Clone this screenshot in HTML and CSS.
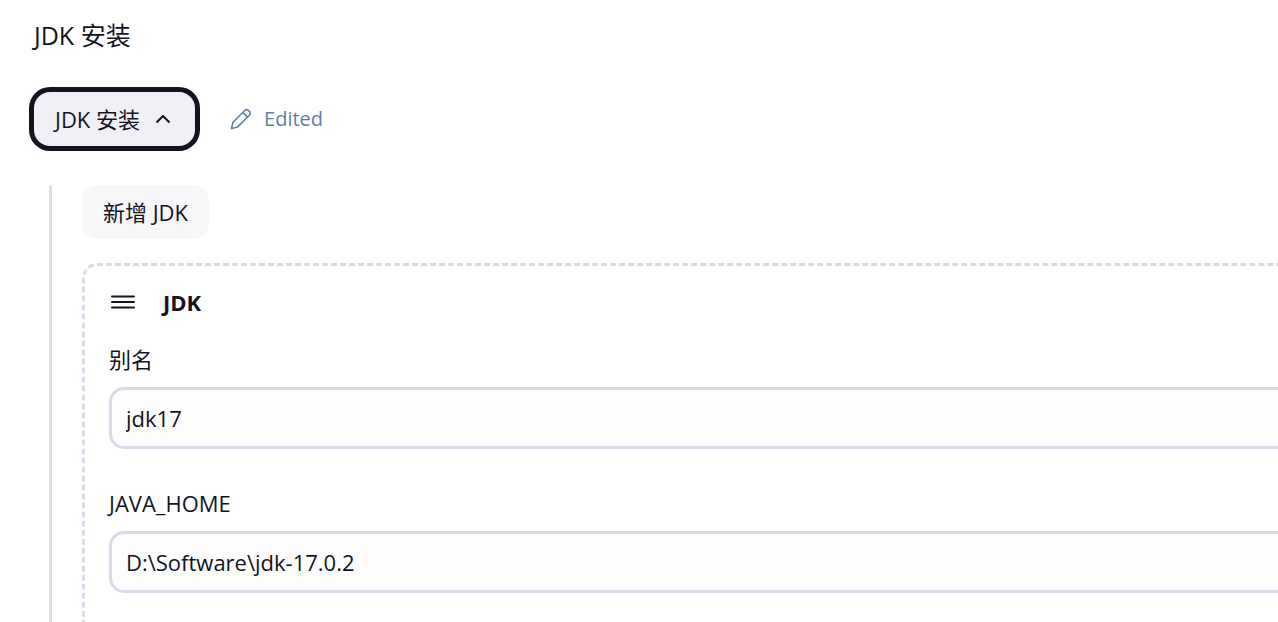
FILE: index.html
```
<!DOCTYPE html>
<html lang="zh-CN">
<head>
<meta charset="utf-8">
<meta name="viewport" content="width=device-width, initial-scale=1">
<title>JDK 安装</title>
<link rel="stylesheet" href="styles.css">
</head>
<body>
<main class="page">
  <h1 class="page-title">JDK 安装</h1>
  <div class="toolbar">
    <button class="toggle" type="button" aria-expanded="true">
      <span>JDK 安装</span>
      <svg class="chevron" viewBox="0 0 16 16" aria-hidden="true"><path d="M1.500 11.500 8 5 14.500 11.500"/></svg>
    </button>
    <div class="edited">
      <svg class="pencil" viewBox="0 0 22 22" aria-hidden="true"><path d="M1.500 20.500 3 14.200 14.700 2.500C17.300-.1 22 4.500 19.400 7.200L7.700 18.900ZM12.800 4.400 17.500 9.100"/></svg>
      <span>Edited</span>
    </div>
  </div>
  <section class="installations">
    <button class="add" type="button">新增 JDK</button>
    <form class="card">
      <div class="card-header">
        <svg class="handle" viewBox="0 0 24 14" aria-hidden="true"><path d="M1 1.500H23M1 7H23M1 12.500H23"/></svg>
        <strong>JDK</strong>
      </div>
      <div class="field">
        <label class="label" for="name">别名</label>
        <input class="input" id="name" type="text" value="jdk17">
      </div>
      <div class="field">
        <label class="label" for="home">JAVA_HOME</label>
        <input class="input" id="home" type="text" value="D:\Software\jdk-17.0.2">
      </div>
    </form>
  </section>
</main>
</body>
</html>
```
FILE: styles.css
```
* { box-sizing: border-box; }

body {
  margin: 0;
  background: #fff;
  color: #14141f;
  font: 22px/30px "Open Sans", "Noto Sans CJK SC", sans-serif;
}

button, input { font: inherit; color: inherit; }

.page {
  display: flex;
  flex-direction: column;
  height: 100vh;
  padding: 18px 0 0 34px;
  overflow: hidden;
}

.page-title {
  margin: 0;
  font-size: 25px;
  font-weight: 400;
  line-height: 34px;
}

.toolbar {
  display: flex;
  align-items: center;
  gap: 35px;
  margin-top: 40px;
}

.toggle {
  display: flex;
  align-items: center;
  gap: 15px;
  padding: 12px 24px 12px 21px;
  border: 0;
  border-radius: 16px;
  background: #f1f0f7;
  box-shadow: 0 0 0 5px #14141f;
}

.chevron, .pencil, .handle {
  fill: none;
  stroke: currentColor;
  stroke-width: 2;
  stroke-linejoin: round;
}

.chevron { width: 16px; height: 16px; }

.edited {
  display: flex;
  align-items: center;
  gap: 12px;
  color: #5f7fa6;
  font-size: 20px;
}

.pencil { width: 22px; height: 22px; stroke-width: 1.5; }

.installations {
  flex: 1 0 auto;
  display: flex;
  flex-direction: column;
  align-items: flex-start;
  gap: 24px;
  margin: 39px -48px 0 15px;
  padding-left: 30px;
  border-left: 3px solid #d7dde8;
  border-top-left-radius: 2px;
}

.add {
  padding: 12px 21px;
  border: 0;
  border-radius: 15px;
  background: #f7f7fa;
}

.card {
  flex: 1 0 auto;
  align-self: stretch;
  padding: 21px 24px 48px;
  border: 3px dashed #d7dde8;
  border-radius: 15px;
}

.card-header {
  display: flex;
  align-items: center;
  gap: 28px;
  padding-left: 2px;
}

.handle { width: 24px; height: 14px; stroke-linecap: round; }

.field { margin-bottom: 39px; }

.card-header + .field { margin-top: 27px; }

.label {
  display: block;
  margin-bottom: 13px;
}

.input {
  display: block;
  width: 100%;
  height: 62px;
  padding: 0 14px;
  border: 3px solid #d7dde8;
  border-radius: 15px;
  background: #fdfdfe;
  outline: 0;
}
```
